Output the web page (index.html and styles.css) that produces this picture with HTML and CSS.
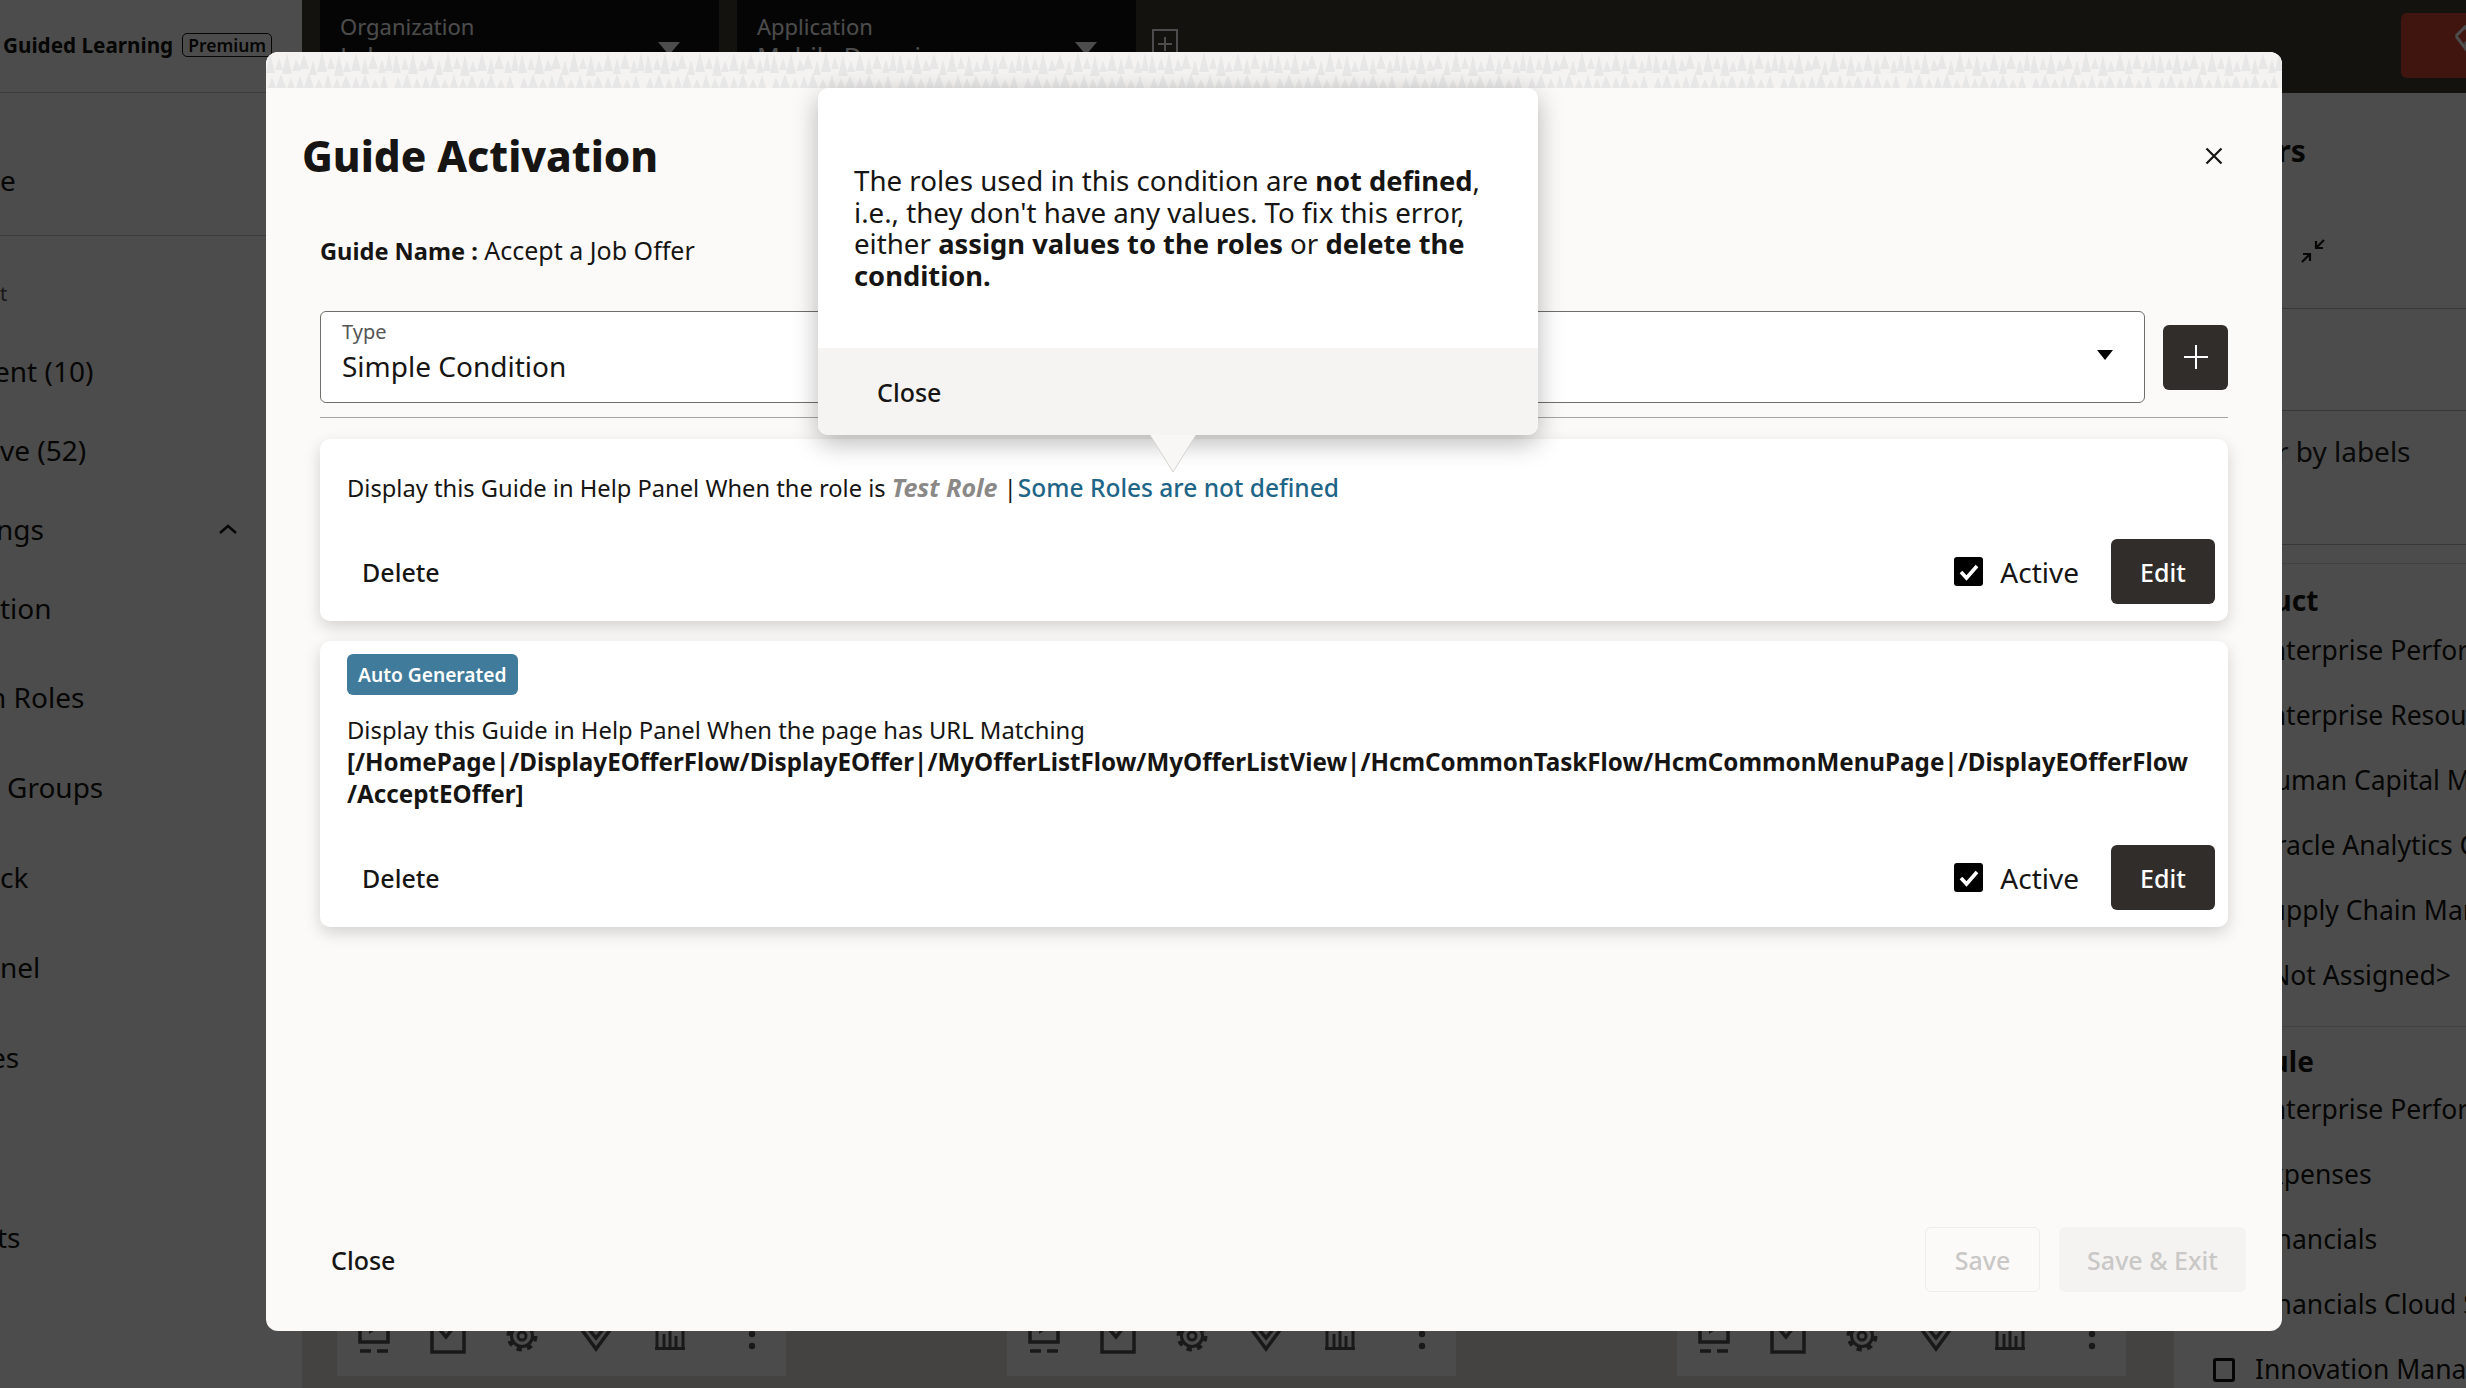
FILE: index.html
```html
<!DOCTYPE html>
<html lang="en">
<head>
<meta charset="utf-8">
<title>Guide Activation</title>
<link rel="stylesheet" href="styles.css">
</head>
<body>
<svg class="defs" width="0" height="0" aria-hidden="true">
  <defs>
    <pattern id="drops" width="126" height="36" patternUnits="userSpaceOnUse">
      <path d="M4 2L9 21H0ZM13 6L17 18H9ZM21 1L26 22H16ZM30 7L35 19H26ZM38 2L43 17H33ZM47 8L51 23H43ZM56 0L61 20H51ZM65 5L69 17H61ZM73 3L78 24H68ZM81 9L85 20H77ZM90 1L95 19H85ZM99 6L103 22H95ZM107 2L112 17H102ZM116 7L120 21H112ZM123 1L127 19H119ZM6 25L10 36H2ZM15 22L20 36H10ZM25 26L29 36H21ZM34 23L38 36H30ZM43 21L48 36H38ZM53 27L57 36H49ZM62 22L66 36H58ZM71 26L75 36H67ZM80 23L85 36H75ZM90 25L94 36H86ZM99 22L104 36H94ZM109 27L113 36H105ZM118 23L122 36H114Z" fill="#e8e7e7"/>
    </pattern>
    <symbol id="ic-play" viewBox="0 0 44 44"><path d="M8 2V30H36V2M8 39H19M25 39H36" fill="none" stroke="currentColor" stroke-width="3.5"/><path d="M17 8L28 15L17 22Z" fill="currentColor"/></symbol>
    <symbol id="ic-check" viewBox="0 0 44 44"><path d="M6 2V40H38V2M14 18L20 25L31 11" fill="none" stroke="currentColor" stroke-width="3.5"/></symbol>
    <symbol id="ic-gear" viewBox="0 0 44 44"><circle cx="22" cy="24" r="4" fill="none" stroke="currentColor" stroke-width="3"/><circle cx="22" cy="24" r="10.5" fill="none" stroke="currentColor" stroke-width="3"/><circle cx="22" cy="24" r="13.5" fill="none" stroke="currentColor" stroke-width="4" stroke-dasharray="5.3 5.3"/></symbol>
    <symbol id="ic-gem" viewBox="0 0 44 44"><path d="M8 18L22 37L36 18M14 16L22 26L30 16" fill="none" stroke="currentColor" stroke-width="3.5"/></symbol>
    <symbol id="ic-chart" viewBox="0 0 44 44"><path d="M7 36.500H37M9 36V10M16 36V22M22 36V12M28 36V24M35 36V16" fill="none" stroke="currentColor" stroke-width="3"/></symbol>
    <symbol id="ic-dots" viewBox="0 0 44 44"><circle cx="22" cy="22" r="3.2" fill="currentColor"/><circle cx="22" cy="34" r="3.2" fill="currentColor"/></symbol>
  </defs>
</svg>

<div class="app">
  <aside class="sidebar">
    <div class="brand"><span class="brand-name">Guided Learning</span><span class="premium">Premium</span></div>
    <div class="side-first"><div class="side-row">e</div></div>
    <div class="side-section">
      <div class="side-sub">t</div>
      <div class="side-row first-row trim-6">ent (10)</div>
      <div class="side-row">ve (52)</div>
      <div class="side-row side-expander"><span class="trim-4">ngs</span>
        <svg class="chev" width="20" height="12" viewBox="0 0 20 12"><path d="M2 10L10 3L18 10" fill="none" stroke="currentColor" stroke-width="2.5"/></svg>
      </div>
      <div class="side-row">tion</div>
      <div class="side-row tall first-tall trim-11">n Roles</div>
      <div class="side-row tall indent">Groups</div>
      <div class="side-row tall">ck</div>
      <div class="side-row tall">nel</div>
      <div class="side-row tall trim-10">es</div>
      <div class="side-row tall gap-top trim-3">ts</div>
    </div>
  </aside>

  <header class="topbar">
    <div class="selector"><span class="selector-text"><span class="selector-label">Organization</span><span class="selector-value">Lab</span></span><span class="caret"></span></div>
    <div class="selector"><span class="selector-text"><span class="selector-label">Application</span><span class="selector-value">Mobile Domain</span></span><span class="caret"></span></div>
    <svg class="add-app" width="28" height="30" viewBox="0 0 28 30"><path d="M2 28V2H26V28M14 9V23M7 16H21" fill="none" stroke="currentColor" stroke-width="2"/></svg>
    <div class="red-action">
      <svg class="red-icon" width="40" height="44" viewBox="0 0 40 44"><path d="M3 12L12 3L20 12L12 20M12 20L28 36" fill="none" stroke="#fff" stroke-width="3"/><path d="M3 12L24 40" fill="none" stroke="#fff" stroke-width="3"/></svg>
    </div>
  </header>

  <main class="main">
    <div class="tile">
      <svg class="ti"><use href="#ic-play"/></svg><svg class="ti"><use href="#ic-check"/></svg><svg class="ti"><use href="#ic-gear"/></svg><svg class="ti"><use href="#ic-gem"/></svg><svg class="ti"><use href="#ic-chart"/></svg><svg class="ti ti-dots"><use href="#ic-dots"/></svg>
    </div>
    <div class="tile">
      <svg class="ti"><use href="#ic-play"/></svg><svg class="ti"><use href="#ic-check"/></svg><svg class="ti"><use href="#ic-gear"/></svg><svg class="ti"><use href="#ic-gem"/></svg><svg class="ti"><use href="#ic-chart"/></svg><svg class="ti ti-dots"><use href="#ic-dots"/></svg>
    </div>
    <div class="tile">
      <svg class="ti"><use href="#ic-play"/></svg><svg class="ti"><use href="#ic-check"/></svg><svg class="ti"><use href="#ic-gear"/></svg><svg class="ti"><use href="#ic-gem"/></svg><svg class="ti"><use href="#ic-chart"/></svg><svg class="ti ti-dots"><use href="#ic-dots"/></svg>
    </div>
  </main>

  <aside class="filters">
    <div class="filters-top">
      <h2 class="filters-title">Filters</h2>
      <svg class="collapse" width="26" height="26" viewBox="0 0 26 26"><path d="M24 2L16 10M16 3V10H23M2 24L10 16M3 16H10V23" fill="none" stroke="currentColor" stroke-width="2.2"/></svg>
    </div>
    <div class="filters-blank"></div>
    <div class="filters-labels"><span>Filter by labels</span></div>
    <div class="filters-gap"></div>
    <section class="filter-group group-product">
      <h3 class="filter-head">Product</h3>
      <div class="filter-item">Enterprise Performance Management</div>
      <div class="filter-item">Enterprise Resource Planning</div>
      <div class="filter-item">Human Capital Management</div>
      <div class="filter-item">Oracle Analytics Cloud</div>
      <div class="filter-item">Supply Chain Management</div>
      <div class="filter-item">&lt;Not Assigned&gt;</div>
    </section>
    <section class="filter-group group-module">
      <h3 class="filter-head">Module</h3>
      <div class="filter-item">Enterprise Performance</div>
      <div class="filter-item">Expenses</div>
      <div class="filter-item">Financials</div>
      <div class="filter-item">Financials Cloud Service</div>
      <div class="filter-item with-box"><span class="box"></span>Innovation Management</div>
    </section>
  </aside>
</div>

<div class="scrim"></div>

<div class="modal" role="dialog">
  <svg class="band" width="100%" height="36"><rect width="100%" height="36" fill="url(#drops)"/></svg>
  <div class="modal-head">
    <h1 class="modal-title">Guide Activation</h1>
    <svg class="modal-x" width="18" height="18" viewBox="0 0 18 18"><path d="M1.5 1.5L16.5 16.5M16.5 1.5L1.5 16.5" fill="none" stroke="#161513" stroke-width="2.2"/></svg>
  </div>
  <div class="modal-body">
    <p class="guide-name"><b>Guide Name :</b> Accept a Job Offer</p>
    <div class="type-row">
      <div class="type-field">
        <span class="type-label">Type</span>
        <span class="type-value">Simple Condition</span>
        <span class="type-caret"></span>
      </div>
      <button class="plus-btn"><svg width="24" height="24" viewBox="0 0 24 24"><path d="M12 0V24M0 12H24" stroke="#fff" stroke-width="2" fill="none"/></svg></button>
    </div>
    <div class="rule"></div>

    <article class="cond cond-one">
      <p class="cond-text">Display this Guide in Help Panel When the role is <b class="role">Test Role</b> | <a class="cond-link">Some Roles are not defined</a></p>
      <div class="cond-actions">
        <button class="ghost-btn">Delete</button>
        <div class="cond-right">
          <span class="check"><svg width="20" height="18" viewBox="0 0 20 18"><path d="M2 9L7.500 15L18 3" fill="none" stroke="#fff" stroke-width="3.6"/></svg></span>
          <span class="active-label">Active</span>
          <button class="edit-btn">Edit</button>
        </div>
      </div>
    </article>

    <article class="cond cond-two">
      <span class="badge">Auto Generated</span>
      <p class="cond-text">Display this Guide in Help Panel When the page has URL Matching<br><b class="url">[/HomePage|/DisplayEOfferFlow/DisplayEOffer|/MyOfferListFlow/MyOfferListView|/HcmCommonTaskFlow/HcmCommonMenuPage|/DisplayEOfferFlow<br>/AcceptEOffer]</b></p>
      <div class="cond-actions">
        <button class="ghost-btn">Delete</button>
        <div class="cond-right">
          <span class="check"><svg width="20" height="18" viewBox="0 0 20 18"><path d="M2 9L7.500 15L18 3" fill="none" stroke="#fff" stroke-width="3.6"/></svg></span>
          <span class="active-label">Active</span>
          <button class="edit-btn">Edit</button>
        </div>
      </div>
    </article>
  </div>
  <div class="modal-foot">
    <button class="foot-close">Close</button>
    <div class="foot-right">
      <button class="save-btn">Save</button>
      <button class="save-exit-btn">Save &amp; Exit</button>
    </div>
  </div>

  <div class="popup">
    <div class="popup-body">The roles used in this condition are <b>not defined</b>, i.e., they don't have any values. To fix this error, either <b>assign values to the roles</b> or <b>delete the condition.</b></div>
    <div class="popup-foot"><button class="popup-close">Close</button></div>
    <svg class="popup-arrow" width="46" height="38" viewBox="0 0 46 38"><path d="M0 0L23 37L46 0Z" fill="#f8f7f6"/><path d="M0 0L23 37L46 0" fill="none" stroke="#d4d3d1" stroke-width="1"/></svg>
  </div>
</div>
</body>
</html>
```
FILE: styles.css
```css
* { box-sizing: border-box; }
html, body { margin: 0; padding: 0; }
body {
  width: 2466px;
  height: 1388px;
  overflow: hidden;
  position: relative;
  font-family: "Noto Sans", "Open Sans", sans-serif;
  font-size: 25px;
  color: #161513;
  background: #f1efed;
}
button { font: inherit; color: inherit; background: none; border: 0; padding: 0; }
p, h1, h2, h3 { margin: 0; }
.defs { position: absolute; }

.app {
  width: 2466px;
  height: 1388px;
  display: grid;
  grid-template-columns: 302px 1fr 292px;
  grid-template-rows: 93px 1fr;
}

/* sidebar */
.sidebar { grid-row: 1 / 3; background: #fff; overflow: hidden; }
.brand {
  height: 93px;
  display: flex;
  align-items: center;
  gap: 9px;
  padding: 0 0 2px 3px;
  border-bottom: 1px solid #c8c8c8;
  white-space: nowrap;
}
.brand-name { font-size: 20.7px; font-weight: 700; }
.premium { font-size: 17.5px; font-weight: 600; border: 1px solid #161513; border-radius: 5px; padding: 0 5px; line-height: 22px; }
.side-first { height: 143px; padding-top: 47px; border-bottom: 1px solid #c8c8c8; }
.side-sub { height: 30px; margin-top: 43px; font-size: 20px; color: #555; line-height: 30px; }
.side-row { height: 79px; display: flex; align-items: center; font-size: 28px; white-space: nowrap; }
.first-row { margin-top: 22px; }
.side-row.tall { height: 90px; }
.first-tall { margin-top: 5px; }
.side-row.indent { padding-left: 7px; }
.side-row.gap-top { margin-top: 90px; }
.side-expander { justify-content: space-between; padding-right: 64px; }
.trim-3 { text-indent: -3px; }
.trim-4 { margin-left: -4px; }
.trim-6 { text-indent: -6px; }
.trim-10 { text-indent: -10px; }
.trim-11 { text-indent: -11px; }

/* top bar */
.topbar { grid-column: 2 / 4; background: #433f35; display: flex; align-items: flex-start; gap: 18px; padding-left: 18px; overflow: hidden; }
.selector { width: 399px; height: 78px; background: #111; border-radius: 0 0 8px 8px; padding: 11px 39px 0 20px; display: flex; justify-content: space-between; color: #fff; font-size: 22px; flex: none; }
.selector-text { display: flex; flex-direction: column; }
.selector-label { line-height: 30px; }
.selector-value { line-height: 30px; font-size: 25px; }
.caret { width: 0; height: 0; border-left: 11px solid transparent; border-right: 11px solid transparent; border-top: 13px solid #fff; margin-top: 31px; }
.add-app { color: #fff; margin: 28px 0 0 -3px; flex: none; }
.red-action { margin-left: auto; width: 65px; height: 65px; margin-top: 13px; background: #d54932; border-radius: 6px 0 0 6px; padding: 11px 0 0 52px; overflow: hidden; flex: none; }
.red-icon { display: block; }

/* main tiles */
.main { background: #e4e2da; display: flex; align-items: flex-end; gap: 221px; padding: 0 0 12px 35px; }
.tile { width: 449px; height: 300px; background: #fafafa; display: flex; align-items: flex-end; padding: 0 0 20px 15px; flex: none; }
.ti { width: 44px; height: 44px; color: #555; margin-right: 30px; flex: none; }
.ti-dots { margin-left: 8px; margin-right: 0; }

/* filters */
.filters { background: #fff; overflow: hidden; white-space: nowrap; }
.filters-top { height: 216px; padding: 38px 0 0 38px; border-bottom: 1px solid #bbb; }
.filters-title { font-size: 30px; font-weight: 700; line-height: 40px; }
.collapse { display: block; margin: 67px 0 0 88px; }
.filters-blank { height: 102px; border-bottom: 1px solid #bbb; }
.filters-labels { height: 134px; padding: 21px 0 0 48px; font-size: 28px; line-height: 38px; color: #222; border-bottom: 1px solid #bbb; }
.filters-gap { height: 19px; border-bottom: 1px solid #ddd; }
.filter-group { padding-left: 81px; }
.group-product { padding-top: 18px; padding-bottom: 18px; border-bottom: 1px solid #ddd; }
.group-module { padding-top: 16px; }
.filter-head { font-size: 28px; font-weight: 700; height: 36px; line-height: 36px; margin-left: -46px; }
.group-module .filter-head { height: 34px; }
.filter-item { height: 65px; line-height: 65px; font-size: 26.5px; }
.with-box { position: relative; }
.box { position: absolute; left: -42px; top: 21px; width: 22px; height: 24px; border: 3px solid #111; border-radius: 3px; }

.scrim { position: absolute; inset: 0; background: rgba(0, 0, 0, 0.7); }

/* modal */
.modal { position: absolute; left: 266px; top: 52px; width: 2016px; height: 1279px; background: #fbfaf8; border-radius: 12px; overflow: hidden; display: flex; flex-direction: column; }
.band { display: block; flex: none; background: #f4f3f2; }
.modal-head { height: 136px; flex: none; display: flex; align-items: center; justify-content: space-between; padding: 0 59px 0 36px; }
.modal-title { font-size: 42.2px; font-weight: 800; line-height: 56px; }
.modal-x { display: block; }
.modal-body { flex: 1; padding: 0 54px; }
.guide-name { height: 87px; padding-top: 10px; line-height: 32px; }
.guide-name b { font-size: 23.6px; font-weight: 700; }
.type-row { display: flex; align-items: center; gap: 18px; height: 92px; }
.type-field { flex: 1; height: 92px; background: #fff; border: 1px solid #6f6e6a; border-radius: 6px; position: relative; padding: 7px 21px; }
.type-label { display: block; font-size: 20px; line-height: 26px; color: #555; }
.type-value { display: block; font-size: 28px; line-height: 42px; }
.type-caret { position: absolute; right: 31px; top: 38px; width: 0; height: 0; border-left: 8px solid transparent; border-right: 8px solid transparent; border-top: 10px solid #000; }
.plus-btn { width: 65px; height: 65px; background: #312d2a; border-radius: 6px; display: flex; align-items: center; justify-content: center; }
.rule { height: 1px; background: #a5a4a1; margin-top: 14px; }

.cond { background: #fff; border-radius: 10px; box-shadow: 0 6px 16px rgba(0, 0, 0, 0.16); padding: 0 13px 0 27px; display: flex; flex-direction: column; }
.cond-one { margin-top: 21px; height: 182px; padding-top: 32px; }
.cond-two { margin-top: 20px; height: 286px; padding-top: 13px; }
.cond-text { line-height: 32px; font-size: 23.8px; }
.cond-one .cond-text { font-size: 23.7px; }
.role { font-style: italic; font-size: 25px; font-weight: 700; color: #8a8987; }
.cond-link { color: #1f6587; font-size: 24.5px; font-weight: 500; margin-left: -5px; }
.url { font-size: 24.2px; font-weight: 700; }
.cond-actions { margin-top: auto; margin-bottom: 17px; display: flex; align-items: center; justify-content: space-between; height: 65px; }
.ghost-btn { font-weight: 500; margin-left: 15px; }
.cond-right { display: flex; align-items: center; }
.check { width: 29px; height: 29px; background: #000; border-radius: 3px; display: flex; align-items: center; justify-content: center; }
.active-label { margin-left: 17px; margin-right: 32px; font-size: 28px; }
.edit-btn { width: 104px; height: 65px; background: #312d2a; color: #fff; border-radius: 6px; font-weight: 500; }
.badge { align-self: flex-start; height: 41px; line-height: 41px; padding: 0 11px; background: #417b9b; color: #fff; border-radius: 6px; font-size: 19.2px; font-weight: 600; margin-bottom: 19px; }

.modal-foot { flex: none; height: 104px; display: flex; align-items: flex-start; justify-content: space-between; padding: 0 36px 0 65px; }
.foot-close { font-weight: 500; height: 65px; }
.foot-right { display: flex; gap: 19px; }
.save-btn { width: 115px; height: 65px; border: 1px solid #eeedeb; border-radius: 6px; color: #c9c8c6; font-weight: 500; }
.save-exit-btn { width: 187px; height: 65px; background: #f4f3f1; border-radius: 6px; color: #c9c8c6; font-weight: 500; }

/* popup */
.popup { position: absolute; left: 552px; top: 36px; width: 720px; height: 347px; background: #fff; border-radius: 10px; box-shadow: 0 8px 26px rgba(0, 0, 0, 0.28); display: flex; flex-direction: column; }
.popup-body { flex: 1; padding: 77px 36px 0; font-size: 27.7px; line-height: 31.5px; }
.popup-body b { font-size: 27.3px; }
.popup-foot { height: 87px; background: #f5f4f2; border-radius: 0 0 10px 10px; display: flex; align-items: center; padding-left: 59px; }
.popup-close { font-weight: 500; }
.popup-arrow { position: absolute; left: 332px; top: 347px; }
```
